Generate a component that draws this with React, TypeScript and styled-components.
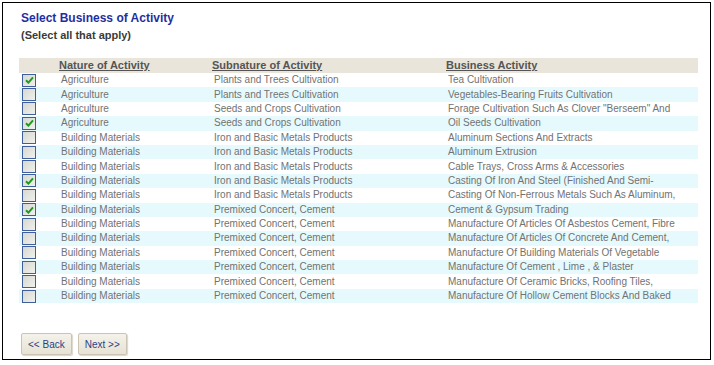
import styled, { createGlobalStyle } from "styled-components";

const GlobalStyle = createGlobalStyle`
  html, body {
    margin: 0;
    padding: 0;
    background: #ffffff;
  }
  body {
    font-family: "Liberation Sans", Arial, sans-serif;
  }
`;

type Row = {
  checked: boolean;
  nature: string;
  subnature: string;
  activity: string;
};

const rows: Row[] = [
  { checked: true, nature: "Agriculture", subnature: "Plants and Trees Cultivation", activity: "Tea Cultivation" },
  { checked: false, nature: "Agriculture", subnature: "Plants and Trees Cultivation", activity: "Vegetables-Bearing Fruits Cultivation" },
  { checked: false, nature: "Agriculture", subnature: "Seeds and Crops Cultivation", activity: 'Forage Cultivation Such As Clover "Berseem" And' },
  { checked: true, nature: "Agriculture", subnature: "Seeds and Crops Cultivation", activity: "Oil Seeds Cultivation" },
  { checked: false, nature: "Building Materials", subnature: "Iron and Basic Metals Products", activity: "Aluminum Sections And Extracts" },
  { checked: false, nature: "Building Materials", subnature: "Iron and Basic Metals Products", activity: "Aluminum Extrusion" },
  { checked: false, nature: "Building Materials", subnature: "Iron and Basic Metals Products", activity: "Cable Trays, Cross Arms & Accessories" },
  { checked: true, nature: "Building Materials", subnature: "Iron and Basic Metals Products", activity: "Casting Of Iron And Steel (Finished And Semi-" },
  { checked: false, nature: "Building Materials", subnature: "Iron and Basic Metals Products", activity: "Casting Of Non-Ferrous Metals Such As Aluminum," },
  { checked: true, nature: "Building Materials", subnature: "Premixed Concert, Cement", activity: "Cement & Gypsum Trading" },
  { checked: false, nature: "Building Materials", subnature: "Premixed Concert, Cement", activity: "Manufacture Of Articles Of Asbestos Cement, Fibre" },
  { checked: false, nature: "Building Materials", subnature: "Premixed Concert, Cement", activity: "Manufacture Of Articles Of Concrete And Cement," },
  { checked: false, nature: "Building Materials", subnature: "Premixed Concert, Cement", activity: "Manufacture Of Building Materials Of Vegetable" },
  { checked: false, nature: "Building Materials", subnature: "Premixed Concert, Cement", activity: "Manufacture Of Cement , Lime , & Plaster" },
  { checked: false, nature: "Building Materials", subnature: "Premixed Concert, Cement", activity: "Manufacture Of Ceramic Bricks, Roofing Tiles," },
  { checked: false, nature: "Building Materials", subnature: "Premixed Concert, Cement", activity: "Manufacture Of Hollow Cement Blocks And Baked" },
];

const App = () => {
  return (
    <>
      <GlobalStyle />
      <Frame>
        <Title>Select Business of Activity</Title>
        <Subtitle>(Select all that apply)</Subtitle>
        <Table>
          <colgroup>
            <col style={{ width: 40 }} />
            <col style={{ width: 153 }} />
            <col style={{ width: 234 }} />
            <col />
          </colgroup>
          <thead>
            <tr>
              <HeadCell />
              <HeadCell>Nature of Activity</HeadCell>
              <HeadCell>Subnature of Activity</HeadCell>
              <HeadCell>Business Activity</HeadCell>
            </tr>
          </thead>
          <tbody>
            {rows.map((r, i) => (
              <BodyRow key={i} $alt={i % 2 === 1}>
                <BoxCell>
                  <Check $checked={r.checked}>
                    {r.checked && (
                      <svg width="9" height="8" viewBox="0 0 9 8">
                        <path
                          d="M1 4.2 L3.4 6.6 L8 1.4"
                          fill="none"
                          stroke="#1d9a1d"
                          strokeWidth="2"
                        />
                      </svg>
                    )}
                  </Check>
                </BoxCell>
                <Cell>{r.nature}</Cell>
                <Cell>{r.subnature}</Cell>
                <Cell>{r.activity}</Cell>
              </BodyRow>
            ))}
          </tbody>
        </Table>
        <Buttons>
          <NavButton>&lt;&lt; Back</NavButton>
          <NavButton>Next &gt;&gt;</NavButton>
        </Buttons>
      </Frame>
    </>
  );
};

const Frame = styled.div`
  box-sizing: border-box;
  margin: 2px 0 0 2px;
  width: 709px;
  height: 358px;
  border: 1px solid #000000;
  padding: 8px 12px 0 16px;
  display: flex;
  flex-direction: column;
`;

const Title = styled.h1`
  margin: 0 0 0 2px;
  font-size: 12px;
  font-weight: bold;
  color: #1f2fa0;
  line-height: 15px;
`;

const Subtitle = styled.div`
  margin: 3px 0 0 2px;
  font-size: 11px;
  font-weight: bold;
  color: #3a3a3a;
  line-height: 13px;
`;

const Table = styled.table`
  margin-top: 16px;
  border-collapse: collapse;
  width: 679px;
  table-layout: fixed;
  font-size: 10px;
`;

const HeadCell = styled.th`
  background: #e9e5da;
  height: 15px;
  padding: 0;
  text-align: left;
  font-size: 11px;
  font-weight: bold;
  color: #555555;
  text-decoration: underline;
  line-height: 15px;
  white-space: nowrap;
`;

const BodyRow = styled.tr<{ $alt: boolean }>`
  background: ${(p) => (p.$alt ? "#e6fafd" : "#ffffff")};
  height: 14.4px;
`;

const Cell = styled.td`
  padding: 0 0 0 2px;
  color: #727272;
  line-height: 14px;
  white-space: nowrap;
  overflow: hidden;
`;

const BoxCell = styled.td`
  padding: 0 0 0 3px;
  line-height: 0;
`;

const Check = styled.span<{ $checked: boolean }>`
  box-sizing: border-box;
  display: inline-flex;
  align-items: center;
  justify-content: center;
  width: 14px;
  height: 13px;
  border: 1px solid #3f5f9c;
  background: linear-gradient(135deg, #d8d8d2, #f0f0ec);
`;

const Buttons = styled.div`
  display: flex;
  gap: 6px;
  margin-top: 30px;
  padding-left: 2px;
`;

const NavButton = styled.button`
  height: 22px;
  padding: 0 6px;
  font-family: "Liberation Sans", Arial, sans-serif;
  font-size: 10px;
  color: #2c3f86;
  background: linear-gradient(#f4f2ea, #e6e2d4);
  border: 1px solid #c9c4b4;
  border-radius: 2px;
  box-shadow: 1px 1px 1px #d9d6cc;
`;

export default App;
